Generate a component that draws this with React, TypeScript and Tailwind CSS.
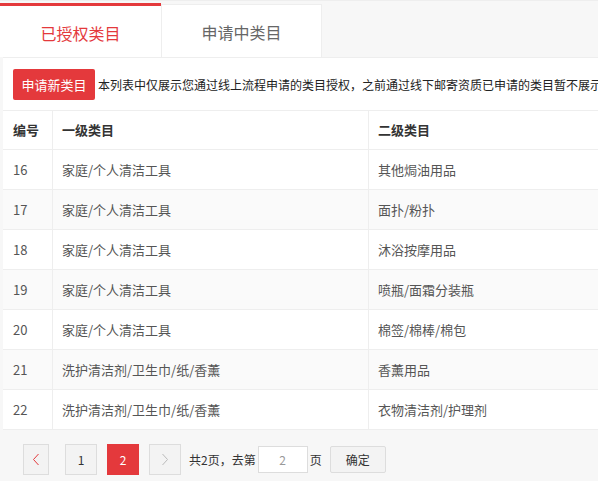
import React from "react";

const rows: [string, string, string][] = [
  ["16", "家庭/个人清洁工具", "其他焗油用品"],
  ["17", "家庭/个人清洁工具", "面扑/粉扑"],
  ["18", "家庭/个人清洁工具", "沐浴按摩用品"],
  ["19", "家庭/个人清洁工具", "喷瓶/面霜分装瓶"],
  ["20", "家庭/个人清洁工具", "棉签/棉棒/棉包"],
  ["21", "洗护清洁剂/卫生巾/纸/香薰", "香薰用品"],
  ["22", "洗护清洁剂/卫生巾/纸/香薰", "衣物清洁剂/护理剂"],
];

export default function App() {
  return (
    <div
      className="w-[598px] h-[481px] bg-[#f7f7f7] overflow-hidden border-t border-[#eeeeee]"
      style={{ fontFamily: '"Noto Sans CJK SC", "Noto Sans", sans-serif' }}
    >
      {/* tabs */}
      <div className="flex h-[56px] pt-[2px]">
        <div className="w-[161px] h-[54px] bg-white border-t-[3px] border-[#e4393c] flex items-center justify-center text-[16px] text-[#e4393c] pt-[2px]">
          已授权类目
        </div>
        <div className="w-[161px] h-[53px] mt-[1px] bg-white border-t border-l border-r border-[#eeeeee] flex items-center justify-center text-[16px] text-[#666666] pt-[2px]">
          申请中类目
        </div>
      </div>

      {/* panel */}
      <div className="ml-[3px] bg-white border-t border-[#eeeeee]">
        <div className="flex items-center px-[10px] pt-[11px] overflow-hidden">
          <div className="w-[82px] h-[31px] shrink-0 bg-[#e4393c] rounded-[2px] text-white text-[13px] flex items-center justify-center">
            申请新类目
          </div>
          <div className="ml-[3px] text-[12px] text-[#222222] whitespace-nowrap">
            本列表中仅展示您通过线上流程申请的类目授权，之前通过线下邮寄资质已申请的类目暂不展示
          </div>
        </div>

        <div className="mt-[10px] border-t border-[#eeeeee] text-[13px]">
          <div className="flex h-[39px] border-b border-[#eeeeee] text-[#333333] font-bold">
            <div className="w-[50px] shrink-0 border-r border-[#eeeeee] pl-[10px] flex items-center">编号</div>
            <div className="w-[316px] shrink-0 border-r border-[#eeeeee] pl-[9px] flex items-center">一级类目</div>
            <div className="flex-1 pl-[9px] flex items-center">二级类目</div>
          </div>
          {rows.map((r, i) => (
            <div
              key={r[0]}
              className={
                "flex h-[40px] border-b border-[#eeeeee] text-[#555555] " +
                (i % 2 === 1 ? "bg-[#fafafa]" : "bg-white")
              }
            >
              <div className="w-[50px] shrink-0 border-r border-[#eeeeee] pl-[10px] flex items-center">{r[0]}</div>
              <div className="w-[316px] shrink-0 border-r border-[#eeeeee] pl-[9px] flex items-center">{r[1]}</div>
              <div className="flex-1 pl-[9px] flex items-center">{r[2]}</div>
            </div>
          ))}
        </div>
      </div>

      {/* pagination */}
      <div className="flex items-center pl-[23px] pt-[14px] text-[12px]">
        <div className="w-[26px] h-[31px] border border-[#dddddd] bg-[#f3f3f3] flex items-center justify-center">
          <svg width="8" height="13" viewBox="0 0 8 13">
            <polyline points="6.5,1 1.5,6.5 6.5,12" fill="none" stroke="#e4393c" strokeWidth="1" />
          </svg>
        </div>
        <div className="ml-[16px] w-[32px] h-[31px] border border-[#dddddd] bg-[#f3f3f3] flex items-center justify-center text-[#333333]">
          1
        </div>
        <div className="ml-[10px] w-[32px] h-[31px] bg-[#e4393c] flex items-center justify-center text-white">
          2
        </div>
        <div className="ml-[10px] w-[32px] h-[31px] border border-[#dddddd] bg-[#f3f3f3] flex items-center justify-center">
          <svg width="8" height="13" viewBox="0 0 8 13">
            <polyline points="1.5,1 6.5,6.5 1.5,12" fill="none" stroke="#bbbbbb" strokeWidth="1" />
          </svg>
        </div>
        <div className="ml-[8px] text-[#333333] whitespace-nowrap">共2页，去第</div>
        <div className="ml-[2px] w-[50px] h-[27px] border border-[#dddddd] bg-white flex items-center justify-center text-[#999999]">
          2
        </div>
        <div className="ml-[2px] text-[#333333]">页</div>
        <div className="ml-[8px] w-[56px] h-[27px] border border-[#dddddd] bg-[#f3f3f3] rounded-[2px] flex items-center justify-center text-[#333333]">
          确定
        </div>
      </div>
    </div>
  );
}
